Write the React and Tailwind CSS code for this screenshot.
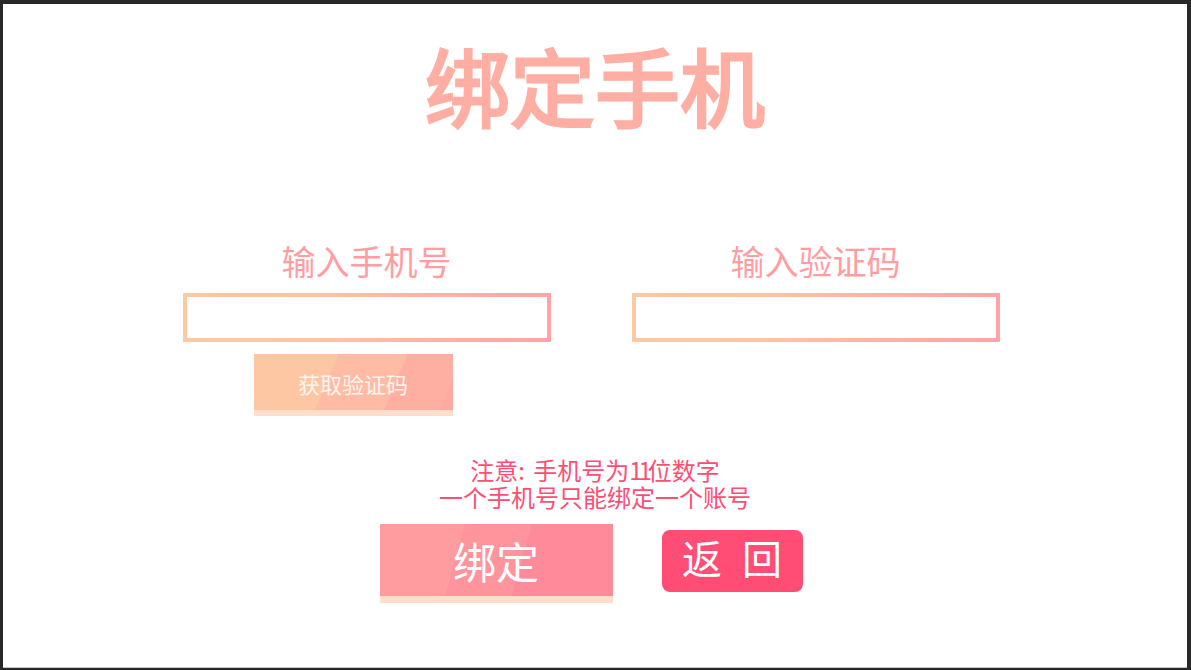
import { useState } from "react";

function GradientInput({ value, onChange }) {
  return (
    <div className="h-[49px] w-[368px] bg-[linear-gradient(90deg,#fec8a3_0%,#fec4a3_35%,#ffb5a3_60%,#ffa3a8_100%)] p-[4px]">
      <input
        className="block h-full w-full bg-white px-2 text-lg text-[#ff4d73] outline-none"
        value={value}
        onChange={(e) => onChange(e.target.value)}
      />
    </div>
  );
}

export default function App() {
  const [phone, setPhone] = useState("");
  const [code, setCode] = useState("");

  return (
    <div className="h-[670px] w-[1191px] overflow-hidden bg-[#282828] pt-[4px] pr-[4px] pb-[2px] pl-[3px] font-['Noto_Sans_CJK_SC','Noto_Sans',sans-serif]">
      <div className="flex h-[664px] flex-col items-center border-b border-[#c8c8c8] bg-white">
        <h1 className="mt-[19px] h-[123px] text-[85px] leading-[122px] font-normal text-[#ffaea3] [-webkit-text-stroke:3px_#ffaea3]">
          绑定手机
        </h1>

        <div className="mt-[90px] mr-[8px] flex gap-[81px]">
          <div className="flex w-[368px] flex-col items-center">
            <label className="h-[57px] text-[34px] leading-[50px] font-normal text-[#ff9da3]">
              输入手机号
            </label>
            <GradientInput value={phone} onChange={setPhone} />
            <button className="mt-[12px] ml-[71px] flex h-[62px] w-[199px] flex-col self-start">
              <span className="flex h-[56px] w-full items-center justify-center bg-[linear-gradient(113deg,#fec7a3_38%,#ffbba4_38%,#ffbba4_69%,#ffafa1_69%,#ffafa1_94%,#ffa9a3_94%)] pt-[3px] text-[22px] text-[#fff4ee]">
                获取验证码
              </span>
              <span className="h-[6px] w-full bg-[#ffdfcc]" />
            </button>
          </div>

          <div className="flex w-[368px] flex-col items-center">
            <label className="h-[57px] text-[34px] leading-[50px] font-normal text-[#ff9da3]">
              输入验证码
            </label>
            <GradientInput value={code} onChange={setCode} />
          </div>
        </div>

        <div className="mt-[40px] text-center text-[24px] leading-[27px] text-[#ff4d73]">
          <p>
            <span className="mr-[3px]">注意:</span> 手机号为<span className="tracking-[-4px]">11</span>位数字
          </p>
          <p>一个手机号只能绑定一个账号</p>
        </div>

        <div className="mt-[14px] mr-[8px] flex items-start gap-[49px]">
          <button className="flex h-[79px] w-[233px] flex-col">
            <span className="flex h-[72px] w-full items-center justify-center bg-[linear-gradient(105.5deg,#ff9ca0_33.6%,#ff949d_33.6%,#ff949d_60%,#ff8b9a_60%)] text-[43px] text-white">
              绑定
            </span>
            <span className="h-[7px] w-full bg-[#ffdfcc]" />
          </button>
          <button className="mt-[6px] flex h-[62px] w-[141px] items-center justify-center gap-[20px] rounded-[8px] bg-[#ff4d75] pb-[8px] text-[40px] text-white">
            <span>返</span>
            <span>回</span>
          </button>
        </div>
      </div>
    </div>
  );
}
